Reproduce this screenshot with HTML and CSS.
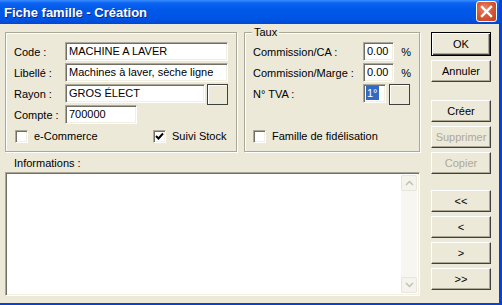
FILE: index.html
```html
<!DOCTYPE html>
<html lang="fr">
<head>
    <meta charset="UTF-8">
    <title>Fiche famille - Création</title>
    <link rel="stylesheet" href="styles.css">
</head>
<body>
    <div class="window">
        <!-- Barre de titre -->
        <div class="titlebar">
            <span class="title">Fiche famille - Création</span>
            <span class="close">
                <svg width="13" height="13" viewBox="0 0 13 13"><path d="M2 2 L11 11 M11 2 L2 11" stroke="#fff" stroke-width="2.4" stroke-linecap="square"/></svg>
            </span>
        </div>

        <div class="dialog">
            <div class="main">
                <div class="groups">
                    <!-- Identification -->
                    <div class="group group-left">
                        <div class="row"><span class="label">Code :</span><span class="field field-long">MACHINE A LAVER</span></div>
                        <div class="row"><span class="label">Libellé :</span><span class="field field-long">Machines à laver, sèche ligne</span></div>
                        <div class="row"><span class="label">Rayon :</span><span class="field field-rayon">GROS ÉLECT</span><span class="btn-square"></span></div>
                        <div class="row"><span class="label">Compte :</span><span class="field field-compte">700000</span></div>
                        <div class="check-row">
                            <span class="check-item check-first"><span class="checkbox"></span>e-Commerce</span>
                            <span class="check-item"><span class="checkbox checked"><svg width="9" height="9" viewBox="0 0 9 9"><path d="M1 4 L3.5 6.5 L8 1.5" fill="none" stroke="#000" stroke-width="2"/></svg></span>Suivi Stock</span>
                        </div>
                    </div>

                    <!-- Taux -->
                    <div class="group group-right">
                        <span class="group-title">Taux</span>
                        <div class="row"><span class="label label-wide">Commission/CA :</span><span class="field field-num">0.00</span><span class="unit">%</span></div>
                        <div class="row"><span class="label label-wide">Commission/Marge :</span><span class="field field-num">0.00</span><span class="unit">%</span></div>
                        <div class="row"><span class="label label-wide">N° TVA :</span><span class="field field-tva"><span class="selected">1°</span></span><span class="btn-square btn-tva"></span></div>
                        <div class="check-row check-row-low">
                            <span class="check-item"><span class="checkbox"></span>Famille de fidélisation</span>
                        </div>
                    </div>
                </div>

                <div class="info-label">Informations :</div>
                <div class="memo">
                    <div class="memo-text"></div>
                    <div class="scrollbar">
                        <span class="scroll-btn"><svg width="9" height="6" viewBox="0 0 9 6"><path d="M1 5 L4.5 1.5 L8 5" fill="none" stroke="#C3C1B4" stroke-width="1.5"/></svg></span>
                        <span class="scroll-track"></span>
                        <span class="scroll-btn"><svg width="9" height="6" viewBox="0 0 9 6"><path d="M1 1 L4.5 4.5 L8 1" fill="none" stroke="#C3C1B4" stroke-width="1.5"/></svg></span>
                    </div>
                </div>
            </div>

            <!-- Boutons -->
            <div class="buttons">
                <span class="btn btn-default">OK</span>
                <span class="btn">Annuler</span>
                <span class="btn btn-gap">Créer</span>
                <span class="btn disabled">Supprimer</span>
                <span class="btn disabled">Copier</span>
                <span class="btn btn-gap-nav">&lt;&lt;</span>
                <span class="btn">&lt;</span>
                <span class="btn">&gt;</span>
                <span class="btn">&gt;&gt;</span>
            </div>
        </div>
    </div>
</body>
</html>
```

FILE: styles.css
```css
body {
    margin: 0;
    font-family: "Liberation Sans", Arial, sans-serif;
    font-size: 11px;
    color: #000;
}

.window {
    width: 502px;
    height: 305px;
    box-sizing: border-box;
    background-color: #ECE9D8;
    border-right: 3px solid #0842D0;
    border-bottom: 2px solid #0842D0;
    overflow: hidden;
}

.titlebar {
    height: 24px;
    display: flex;
    align-items: center;
    justify-content: space-between;
    padding: 0 2px 0 4px;
    background: linear-gradient(#3A8DFF 0, #0C63F0 3px, #0058EA 40%, #0054E3 80%, #0048D4 100%);
}

.title {
    color: #fff;
    font-weight: bold;
    font-size: 13px;
    text-shadow: 1px 1px 0 #0A2A8A;
}

.close {
    width: 19px;
    height: 19px;
    margin-top: -2px;
    border: 1px solid #fff;
    border-radius: 3px;
    background: radial-gradient(circle at 40% 35%, #E98A6C 0, #D85A38 45%, #C13E1C 100%);
    display: flex;
    align-items: center;
    justify-content: center;
}

.dialog {
    display: flex;
    padding: 8px 0 0 5px;
}

.main {
    width: 415px;
}

.groups {
    display: flex;
    gap: 7px;
}

.group {
    position: relative;
    box-sizing: border-box;
    height: 120px;
    border: 1px solid #ACA899;
    box-shadow: inset 1px 1px 0 #fff, 1px 1px 0 #fff;
    padding: 9px 8px 0 8px;
}

.group-left {
    width: 232px;
}

.group-right {
    width: 176px;
}

.group-title {
    position: absolute;
    top: -8px;
    left: 7px;
    padding: 0 2px;
    background-color: #ECE9D8;
    line-height: 14px;
}

.row {
    display: flex;
    align-items: center;
    height: 19px;
    margin-bottom: 2px;
}

.label {
    width: 51px;
    flex-shrink: 0;
}

.label-wide {
    width: 110px;
}

.field {
    box-sizing: border-box;
    height: 19px;
    line-height: 17px;
    padding-left: 3px;
    background-color: #fff;
    border: 1px solid;
    border-color: #ACA899 #fff #fff #ACA899;
    box-shadow: inset 1px 1px 0 #716F64, inset -1px -1px 0 #F1EFE2;
    white-space: nowrap;
    overflow: hidden;
}

.field-long {
    width: 164px;
}

.field-rayon {
    width: 141px;
}

.field-compte {
    width: 72px;
}

.field-num {
    width: 35px;
}

.field-tva {
    width: 23px;
    padding-left: 2px;
    padding-top: 1px;
    line-height: 14px;
}

.selected {
    display: inline-block;
    background-color: #316AC5;
    color: #fff;
    padding: 0 1px;
}

.unit {
    margin-left: 7px;
}

.btn-square {
    box-sizing: border-box;
    width: 21px;
    height: 21px;
    margin-left: 2px;
    margin-top: 1px;
    border: 1px solid #404040;
    box-shadow: inset 1px 1px 0 #fff;
    background-color: #ECE9D8;
}

.btn-tva {
    margin-left: 3px;
}

.check-row {
    display: flex;
    align-items: center;
    margin-top: 5px;
    height: 14px;
}

.check-row-low {
    margin-top: 26px;
}

.check-item {
    display: flex;
    align-items: center;
}

.check-first {
    width: 138px;
    margin-left: 1px;
}

.checkbox {
    box-sizing: border-box;
    width: 13px;
    height: 13px;
    margin-right: 6px;
    background-color: #fff;
    border: 1px solid;
    border-color: #ACA899 #fff #fff #ACA899;
    box-shadow: inset 1px 1px 0 #716F64, inset -1px -1px 0 #F1EFE2;
    display: flex;
    align-items: center;
    justify-content: center;
}

.info-label {
    padding-left: 9px;
    margin-top: 4px;
    line-height: 14px;
    height: 14px;
}

.memo {
    display: flex;
    box-sizing: border-box;
    height: 124px;
    margin-top: 2px;
    background-color: #fff;
    border: 1px solid;
    border-color: #ACA899 #fff #fff #ACA899;
    box-shadow: inset 1px 1px 0 #716F64, inset -1px -1px 0 #F1EFE2;
    padding: 2px 2px 2px 2px;
}

.memo-text {
    flex: 1;
}

.scrollbar {
    width: 16px;
    display: flex;
    flex-direction: column;
    background-color: #F7F6F1;
}

.scroll-btn {
    box-sizing: border-box;
    width: 16px;
    height: 16px;
    border: 1px solid #E8E6DA;
    border-radius: 2px;
    background-color: #F4F3EC;
    display: flex;
    align-items: center;
    justify-content: center;
}

.scroll-track {
    flex: 1;
}

.buttons {
    width: 60px;
    margin-left: 11px;
    display: flex;
    flex-direction: column;
}

.btn {
    box-sizing: border-box;
    height: 22px;
    margin-bottom: 4px;
    display: flex;
    align-items: center;
    justify-content: center;
    border: 1px solid;
    border-color: #fff #404040 #404040 #fff;
    box-shadow: inset -1px -1px 0 #ACA899;
    background-color: #ECE9D8;
}

.btn-default {
    height: 24px;
    border-color: #000;
    box-shadow: inset 1px 1px 0 #fff, inset -1px -1px 0 #404040, inset -2px -2px 0 #ACA899;
}

.btn-gap {
    margin-top: 14px;
}

.btn-gap-nav {
    margin-top: 12px;
}

.disabled {
    color: #ACA899;
}
```
